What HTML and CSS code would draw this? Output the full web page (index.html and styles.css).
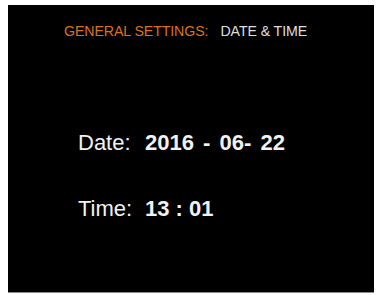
FILE: index.html
```html
<!DOCTYPE html>
<html>
<head>
<meta charset="utf-8">
<link rel="stylesheet" href="styles.css">
</head>
<body>
<div class="screen">
  <div class="title"><span class="section">GENERAL SETTINGS:</span><span class="page">DATE &amp; TIME</span></div>
  <div class="rows">
    <div class="row"><span class="label">Date:</span><span class="value date">2016 - 06- 22</span></div>
    <div class="row"><span class="label">Time:</span><span class="value">13 : 01</span></div>
  </div>
</div>
</body>
</html>
```
FILE: styles.css
```css
html, body {
  margin: 0;
  padding: 0;
  background: #ffffff;
}
body {
  padding: 5px 2px 2px 8px;
}
.screen {
  box-sizing: border-box;
  width: 366px;
  height: 288px;
  background: #000000;
  border-bottom: 1px solid #8a8a8a;
  font-family: "Liberation Sans", Arial, sans-serif;
  display: flex;
  flex-direction: column;
}
.title {
  padding: 18px 0 0 56px;
  font-size: 14.2px;
  line-height: 17px;
  letter-spacing: -0.1px;
  display: flex;
  gap: 12px;
}
.section {
  color: #d9731f;
}
.page {
  color: #dedede;
}
.rows {
  padding: 90px 0 0 70px;
  display: flex;
  flex-direction: column;
  gap: 40px;
}
.row {
  display: flex;
  align-items: baseline;
  font-size: 22px;
  line-height: 26px;
  color: #f2f2f2;
}
.label {
  width: 67px;
  font-weight: 400;
}
.value {
  font-weight: 700;
}
.date {
  word-spacing: 3px;
}
```
